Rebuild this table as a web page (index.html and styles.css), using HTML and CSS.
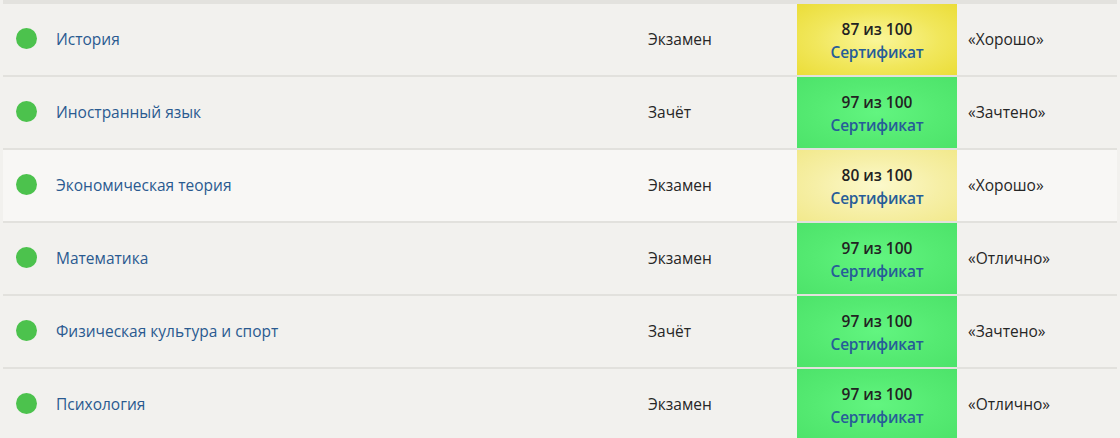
FILE: index.html
```html
<!DOCTYPE html>
<html lang="ru">
<head>
<meta charset="utf-8">
<link rel="stylesheet" href="styles.css">
</head>
<body>
<div class="table">
  <div class="row">
    <div class="c-dot"><span class="dot"></span></div>
    <div class="c-name"><a href="#">История</a></div>
    <div class="c-type">Экзамен</div>
    <div class="c-grade g-yellow"><span class="score">87 из 100</span><a href="#">Сертификат</a></div>
    <div class="c-result">«Хорошо»</div>
  </div>
  <div class="row">
    <div class="c-dot"><span class="dot"></span></div>
    <div class="c-name"><a href="#">Иностранный язык</a></div>
    <div class="c-type">Зачёт</div>
    <div class="c-grade g-green"><span class="score">97 из 100</span><a href="#">Сертификат</a></div>
    <div class="c-result">«Зачтено»</div>
  </div>
  <div class="row hl">
    <div class="c-dot"><span class="dot"></span></div>
    <div class="c-name"><a href="#">Экономическая теория</a></div>
    <div class="c-type">Экзамен</div>
    <div class="c-grade g-light"><span class="score">80 из 100</span><a href="#">Сертификат</a></div>
    <div class="c-result">«Хорошо»</div>
  </div>
  <div class="row">
    <div class="c-dot"><span class="dot"></span></div>
    <div class="c-name"><a href="#">Математика</a></div>
    <div class="c-type">Экзамен</div>
    <div class="c-grade g-green"><span class="score">97 из 100</span><a href="#">Сертификат</a></div>
    <div class="c-result">«Отлично»</div>
  </div>
  <div class="row">
    <div class="c-dot"><span class="dot"></span></div>
    <div class="c-name"><a href="#">Физическая культура и спорт</a></div>
    <div class="c-type">Зачёт</div>
    <div class="c-grade g-green"><span class="score">97 из 100</span><a href="#">Сертификат</a></div>
    <div class="c-result">«Зачтено»</div>
  </div>
  <div class="row">
    <div class="c-dot"><span class="dot"></span></div>
    <div class="c-name"><a href="#">Психология</a></div>
    <div class="c-type">Экзамен</div>
    <div class="c-grade g-green"><span class="score">97 из 100</span><a href="#">Сертификат</a></div>
    <div class="c-result">«Отлично»</div>
  </div>
</div>
</body>
</html>
```

FILE: styles.css
```css
html, body {
  margin: 0;
  padding: 0;
  background: #f2f1ee;
  font-family: "Open Sans", "Noto Sans", sans-serif;
  font-size: 15.5px;
  color: #262626;
}
.table {
  margin-left: 3px;
  width: 1114px;
  border-top: 4px solid #e3e2de;
}
.row {
  display: grid;
  grid-template-columns: 53px 592px 149px 160px 1fr;
  height: 71px;
  border-bottom: 2px solid #e2e1dd;
  align-items: center;
}
.row.hl {
  background: #f8f7f5;
}
.c-dot {
  display: flex;
  align-items: center;
  padding-left: 13px;
  padding-bottom: 2px;
}
.dot {
  width: 21px;
  height: 21px;
  border-radius: 50%;
  background: #4cc24d;
}
.c-name,
.c-type,
.c-result {
  padding-bottom: 1px;
}
.c-name a {
  color: #2a5a90;
  text-decoration: none;
}
.c-grade {
  align-self: stretch;
  display: flex;
  flex-direction: column;
  align-items: center;
  justify-content: center;
  padding-top: 2px;
  font-size: 15.5px;
  font-weight: 600;
  line-height: 23px;
}
.c-grade .score {
  color: #222;
}
.c-grade a {
  color: #265c98;
  text-decoration: none;
  letter-spacing: -0.2px;
}
.g-yellow {
  background: radial-gradient(ellipse at center, #faf69a 0%, #f1e75c 55%, #ebdd38 100%);
}
.g-green {
  background: radial-gradient(ellipse at center, #62f580 0%, #55ea72 55%, #4de36a 100%);
}
.g-light {
  background: radial-gradient(ellipse at center, #fcf9cc 0%, #f6efa6 55%, #f2e98c 100%);
}
.c-result {
  padding-left: 11px;
}
```
